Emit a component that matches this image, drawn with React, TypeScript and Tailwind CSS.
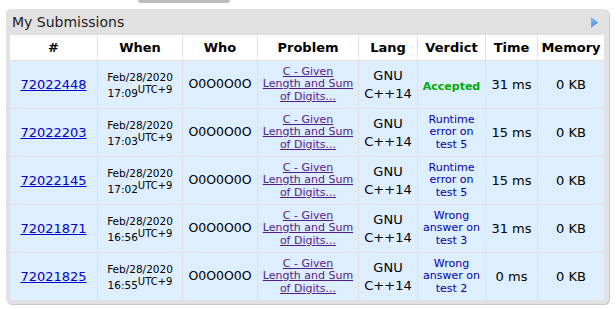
const rows = [
  { id: "72022448", time: "17:09", verdict: "ok", text: "Accepted", ms: "31 ms" },
  { id: "72022203", time: "17:03", verdict: "re", text: "Runtime error on test 5", ms: "15 ms" },
  { id: "72022145", time: "17:02", verdict: "re", text: "Runtime error on test 5", ms: "15 ms" },
  { id: "72021871", time: "16:56", verdict: "wa", text: "Wrong answer on test 3", ms: "31 ms" },
  { id: "72021825", time: "16:55", verdict: "wa", text: "Wrong answer on test 2", ms: "0 ms" },
];

const headers = ["#", "When", "Who", "Problem", "Lang", "Verdict", "Time", "Memory"];
const widths = ["w-[88px]", "w-[85px]", "w-[75px]", "w-[101px]", "w-[59px]", "w-[68px]", "w-[52px]", "w-[67px]"];

function Verdict({ kind, text }: { kind: string; text: string }) {
  if (kind === "ok") {
    return <span className="text-[11px] font-bold text-[#00aa00]">{text}</span>;
  }
  const [a, b] = kind === "re" ? ["Runtime", "error on"] : ["Wrong", "answer on"];
  const test = text.split(" ").slice(-2).join(" ");
  return (
    <span className="text-[11px] leading-[12.5px] text-[#0000aa] block">
      {a}
      <br />
      {b}
      <br />
      {test}
    </span>
  );
}

export default function App() {
  return (
    <div className="relative w-[616px] h-[309px] bg-white font-['DejaVu_Sans',Verdana,sans-serif] text-black">
      {/* tab stub from the box above */}
      <div className="absolute left-[138px] top-0 w-[92px] h-[3px] bg-[#bdbdbd] rounded-b-[3px]" />

      <div className="pt-[9px] pl-[6px]">
        <div className="w-[603px] bg-[#e1e1e1] rounded-[5px] shadow-[1px_1px_0_#c9c9c9] pl-[3px] pb-[3px]">
          <div className="h-[25px] flex items-center justify-between pl-[3px] pr-[11px]">
            <span className="text-[14px] text-[#222] pt-[1px]">My Submissions</span>
            <svg width="7" height="11" viewBox="0 0 7 11" className="mt-[1px]">
              <defs>
                <linearGradient id="arr" x1="0" y1="0" x2="1" y2="1">
                  <stop offset="0" stopColor="#8ec2f2" />
                  <stop offset="1" stopColor="#2f7fd6" />
                </linearGradient>
              </defs>
              <path d="M0 0 L7 5.5 L0 11 Z" fill="url(#arr)" />
            </svg>
          </div>

          <table className="border-collapse table-fixed w-[595px]">
            <thead>
              <tr className="h-[26px] bg-white">
                {headers.map((h, i) => (
                  <th
                    key={h}
                    className={`${widths[i]} border border-[#e1e1e1] p-0 text-center text-[13px] font-bold`}
                  >
                    {h}
                  </th>
                ))}
              </tr>
            </thead>
            <tbody>
              {rows.map((r) => (
                <tr key={r.id} className="h-[48px] bg-[#ddeeff] text-center">
                  <td className="border border-[#e1e1e1] p-0 text-[13px]">
                    <a href="#" className="text-[#0000cc] underline">{r.id}</a>
                  </td>
                  <td className="border border-[#e1e1e1] p-0 text-[10.5px] leading-[16px]">
                    Feb/28/2020
                    <br />
                    {r.time}
                    <sup className="text-[10px] relative top-[-4px] align-baseline">UTC+9</sup>
                  </td>
                  <td className="border border-[#e1e1e1] p-0 text-[12.5px]">O0O0O0O</td>
                  <td className="border border-[#e1e1e1] p-0 text-[11px] leading-[12.5px]">
                    <a href="#" className="text-[#551a8b] underline">
                      C - Given
                      <br />
                      Length and Sum
                      <br />
                      of Digits...
                    </a>
                  </td>
                  <td className="border border-[#e1e1e1] p-0 text-[13px] leading-[18px]">
                    GNU
                    <br />
                    C++14
                  </td>
                  <td className="border border-[#e1e1e1] p-0">
                    <Verdict kind={r.verdict} text={r.text} />
                  </td>
                  <td className="border border-[#e1e1e1] p-0 text-[13px]">{r.ms}</td>
                  <td className="border border-[#e1e1e1] p-0 text-[13px]">0 KB</td>
                </tr>
              ))}
            </tbody>
          </table>
        </div>
      </div>
    </div>
  );
}
